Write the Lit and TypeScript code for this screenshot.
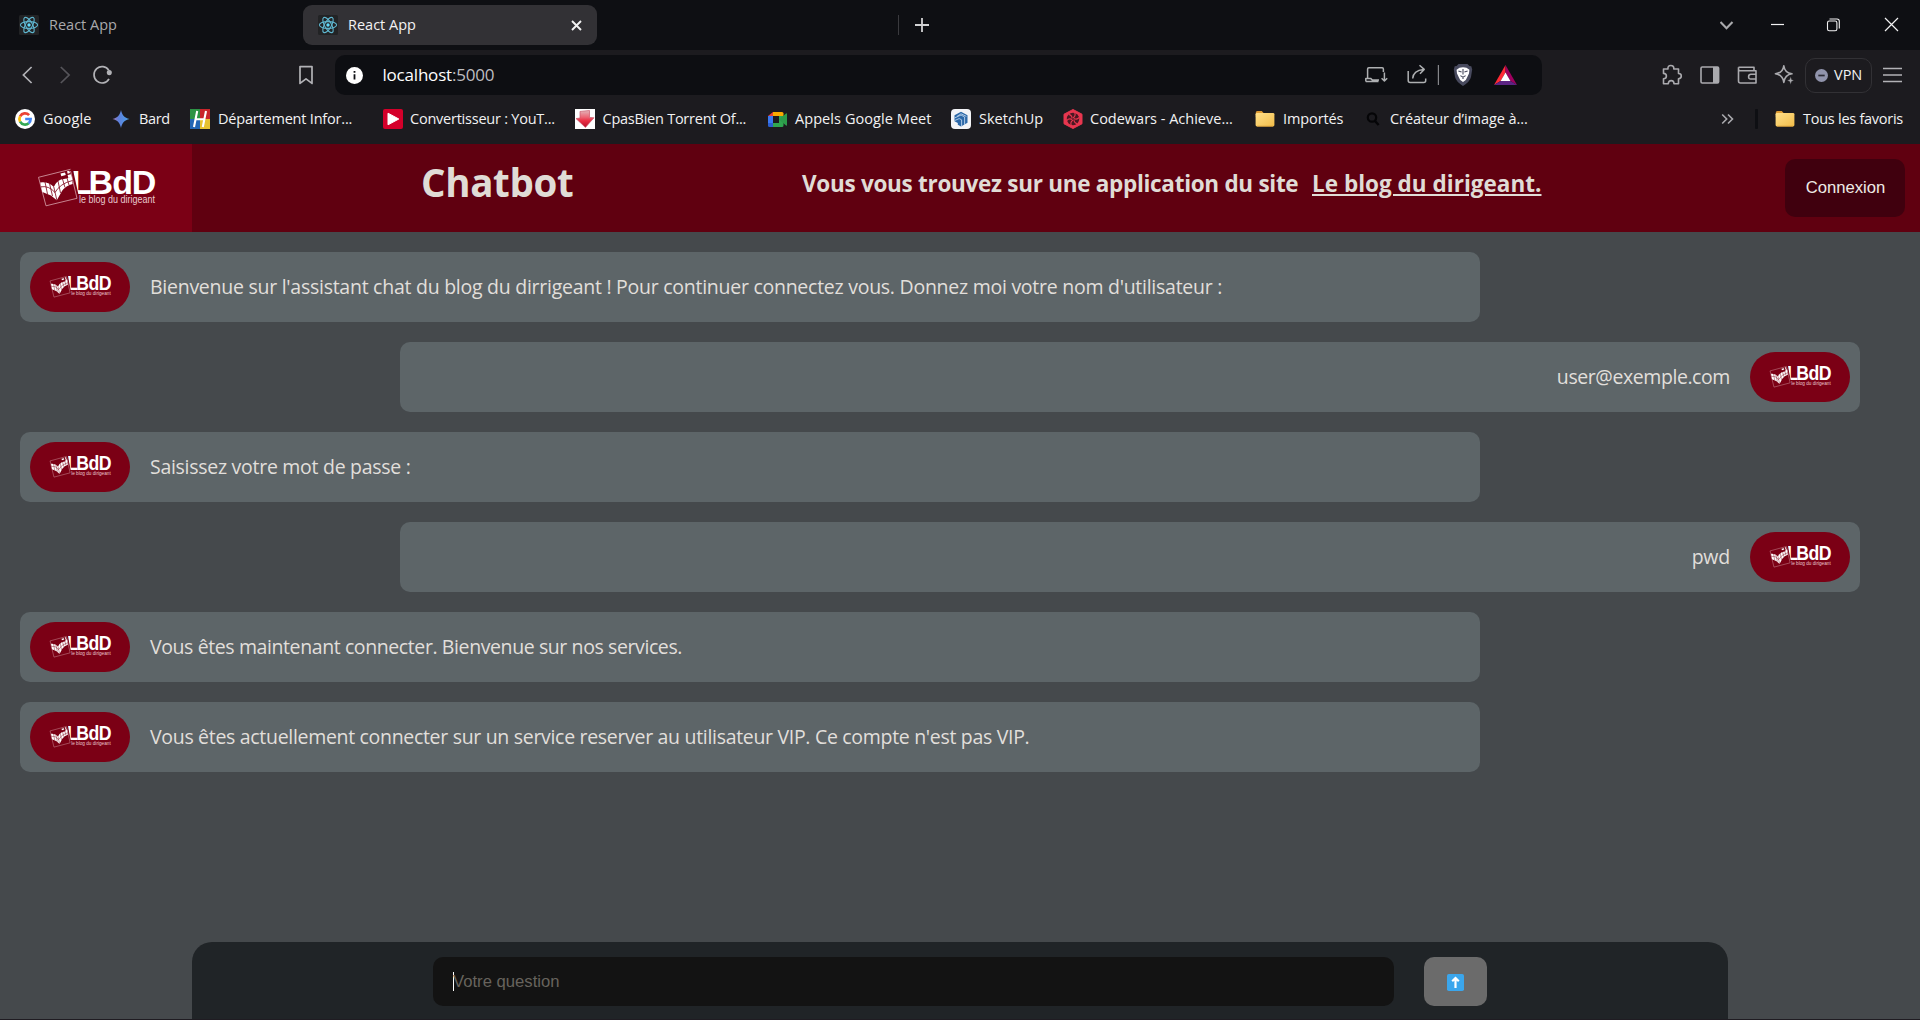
import { LitElement, html, css, svg } from "lit";
import { customElement, property } from "lit/decorators.js";
import { styleMap } from "lit/directives/style-map.js";

const icon = (w: number, h: number, body: unknown) => html`<svg
  width=${w}
  height=${h}
  viewBox="0 0 ${w} ${h}"
  fill="none"
  style="display:block;flex:none"
>
  ${body}
</svg>`;

const reactIcon = icon(20, 20, svg`
  <rect width="20" height="20" rx="1.5" fill="#222325"/>
  <g stroke="#5fb6cf" stroke-width="1.1">
    <ellipse cx="10" cy="10" rx="8.6" ry="3.4"/>
    <ellipse cx="10" cy="10" rx="8.6" ry="3.4" transform="rotate(60 10 10)"/>
    <ellipse cx="10" cy="10" rx="8.6" ry="3.4" transform="rotate(120 10 10)"/>
  </g>
  <circle cx="10" cy="10" r="1.7" fill="#61dafb"/>`);

const googleIcon = icon(20, 20, svg`
  <circle cx="10" cy="10" r="10" fill="#fff"/>
  <g stroke-width="2.7">
    <path d="M14.1 6.2A5.6 5.6 0 0 0 5.1 7.3" stroke="#ea4335"/>
    <path d="M5.1 7.3A5.6 5.6 0 0 0 5.1 12.7" stroke="#fbbc05"/>
    <path d="M5.1 12.7A5.6 5.6 0 0 0 13.7 14.2" stroke="#34a853"/>
    <path d="M13.7 14.2A5.6 5.6 0 0 0 15.6 10H10.2" stroke="#4285f4"/>
  </g>`);

const bardIcon = icon(18, 20, svg`
  <defs><linearGradient id="bard" x1="0" y1="0" x2="1" y2="0"><stop offset="0" stop-color="#a67bb0"/><stop offset=".35" stop-color="#5f7fdc"/><stop offset="1" stop-color="#4aa3e8"/></linearGradient></defs>
  <path d="M9 1C10 6 12.4 8.8 17.5 10C12.4 11.2 10 14 9 19C8 14 5.6 11.2 .5 10C5.6 8.8 8 6 9 1Z" fill="url(#bard)"/>`);

const deptIcon = icon(20, 20, svg`
  <path d="M0 0H10V10H0Z" fill="#2c9345"/><path d="M10 0H20V10H10Z" fill="#c9252b"/>
  <path d="M0 10H10V20H0Z" fill="#2266b5"/><path d="M10 10H20V20H10Z" fill="#e6c22f"/>
  <path d="M7.2 2L4 18M16 2L12.8 18M5.8 10.3H14.4" stroke="#fff" stroke-width="2.1"/>`);

const convIcon = icon(20, 20, svg`
  <rect width="20" height="20" rx="2" fill="#d4002a"/>
  <path d="M5 4.2L15.8 10L5 15.8Z" fill="#fff" stroke="#fff" stroke-linejoin="round"/>`);

const cpasIcon = icon(20, 20, svg`
  <defs><linearGradient id="cpas" x1="0" y1="0" x2="0" y2="1"><stop offset="0" stop-color="#e3b4ba"/><stop offset=".4" stop-color="#ec6473"/><stop offset=".6" stop-color="#ea2f45"/><stop offset="1" stop-color="#b80f28"/></linearGradient></defs>
  <rect width="20" height="20" fill="#fff"/>
  <path d="M5 2.4L14.5 1.5V8.4L19 8.8L10.4 18.4L1 9.6L5 9Z" fill="url(#cpas)" stroke="#c9586a" stroke-width=".7"/>`);

const meetIcon = icon(20, 18, svg`
  <path d="M5 2V6H0Z" fill="#ea4335"/><path d="M5 2H14Q15.5 2 15.5 3.5V6H5Z" fill="#f9ab00"/>
  <path d="M0 6H5V13H0Z" fill="#3b78f0"/><path d="M0 13H5V17H1.5Q0 17 0 15.5Z" fill="#2a5fd0"/>
  <path d="M5 13H11V6H15.5V15.5Q15.5 17 14 17H5Z" fill="#2fa650"/>
  <path d="M11 9.5L18 3.5Q19 3 19 4V15Q19 16 18 15.5Z" fill="#2c9c4a"/>`);

const sketchIcon = icon(20, 20, svg`
  <rect width="20" height="20" rx="4" fill="#f3f4f7"/>
  <path d="M3.5 6.2L10 2.8L16.5 6.2V13.8L10 17.4L6.8 15.8V14L3.5 12.2Z" fill="#2c68a8"/>
  <path d="M3.5 9L10 6L13.6 8V16M3.5 11.6L8.2 9.6L10.6 10.8V17.2M6 7.4L10 4.8L15.4 7.4" stroke="#b9d3ec" stroke-width=".9"/>`);

const codewarsIcon = icon(20, 20, svg`
  <path d="M10 .5L19 5.2V14.8L10 19.5L1 14.8V5.2Z" fill="#e8364f" stroke="#e8364f" stroke-linejoin="round"/>
  <circle cx="10" cy="10" r="6.2" fill="#4a1822"/>
  <g stroke="#e8364f" stroke-width="1.1">
    ${[0, 60, 120, 180, 240, 300].map(a => svg`<path d="M10 9Q13 7 11.8 3.8" transform="rotate(${a} 10 10)"/>`)}
  </g>`);

const folderIcon = icon(20, 20, svg`
  <defs><linearGradient id="fold" x1="0" y1="0" x2="1" y2="1"><stop offset="0" stop-color="#ffe08a"/><stop offset="1" stop-color="#f2bd4a"/></linearGradient></defs>
  <path d="M.8 3.5Q.8 2 2.2 2H6.8L8.6 4H18V8H.8Z" fill="#dd9a33"/>
  <rect x=".6" y="3.9" width="18.8" height="13.6" rx="1.4" fill="url(#fold)"/>
  <path d="M2 17.2H18" stroke="#d99d36" stroke-width=".8"/>`);

const searchIcon = icon(14, 16, svg`
  <circle cx="6" cy="6.5" r="4.2" stroke="#050507" stroke-width="2.2"/>
  <path d="M9 10L12.6 14" stroke="#050507" stroke-width="2.4"/>`);

const infoIcon = icon(17, 17, svg`
  <circle cx="8.5" cy="8.5" r="8.5" fill="#fff"/>
  <path d="M8.5 7.2V12.6M8.5 4V5.8" stroke="#0d0e12" stroke-width="1.8"/>`);

const braveIcon = icon(20, 24, svg`
  <path d="M5.5 1H14.5L16.4 3L18.3 3.2L19.2 6.5L18 14Q17 18.5 10 23Q3 18.5 2 14L.8 6.5L1.7 3.2L3.6 3Z" fill="#484a5e"/>
  <path d="M6.5 4.8L10 4.2L13.5 4.8L16.4 6.8L16 10.6L14.2 14.2L12.8 17L10 19L7.2 17L5.8 14.2L4 10.6L3.6 6.8Z" fill="#fff"/>
  <path d="M5.4 8L8.6 9M14.6 8L11.4 9M10 6V11.4M7.4 12.6L10 14.2L12.6 12.6M10 14V16" stroke="#484a5e" stroke-width="1.1"/>`);

const batIcon = icon(23, 20, svg`
  <path d="M11.5 0L0 20L6.6 16L11.5 7.4Z" fill="#ff2a35"/>
  <path d="M11.5 0L23 20L16.4 16L11.5 7.4Z" fill="#9e005f"/>
  <path d="M0 20H23L16.4 16H6.6Z" fill="#5c2483"/>
  <path d="M11.5 7.4L16.4 16H6.6Z" fill="#fff"/>`);

/** Brand lock-up: tilted book mark, name and tagline. */
@customElement("lbdd-logo")
class LbddLogo extends LitElement {
  static styles = css`
    :host { display: block; background: #7b0015; overflow: hidden; }
    svg { display: block; width: 100%; height: 100%; }
    .name { font: bold 34px "Liberation Sans", Arial, sans-serif; fill: #fff; }
    .tag { font: 10px "Liberation Sans", Arial, sans-serif; fill: #e9c9ce; }
  `;
  render() {
    return html`<svg viewBox="0 0 192 88" preserveAspectRatio="none">
      <text class="name" x="71 88.6 112.2 131.8" y="50">LBdD</text>
      <path d="M70 24H72.6L78.4 50.5H70Z" fill="#7b0015"/>
      <path d="M70.5 25.3L38.5 33.3L46 61.8L77 54.3L70.5 27" fill="none" stroke="#d9a5ad" stroke-width=".8"/>
      <path d="M40.3 38.4Q49 37.5 53.8 43Q56 37.5 61 35.5L66.5 34.5L71.8 32.6L72.6 40Q66 41.5 62 47L56.8 56.3L51 51.5L42.3 48Z" fill="#fff"/>
      <path d="M41 42.8Q49 41.5 55 48.5Q60 39.5 72.5 36.5M45 38L47.5 50M49.5 39.5L52.5 52M53.8 43L56.8 56M58 37L60.5 49M62.5 35L65 43.5M67 34L69 41" fill="none" stroke="#7b0015" stroke-width=".8"/>
      <path d="M60.5 29.5L65 28.4L65.8 31L61.3 32.2ZM67 27.3L69.3 26.7L70 29L67.7 29.7ZM67.6 31L70.8 30.2L71.6 33L68.4 34Z" fill="#fff"/>
      <text class="tag" x="79" y="58.6" textLength="76" lengthAdjust="spacingAndGlyphs">le blog du dirigeant</text>
    </svg>`;
  }
}

interface Bookmark { label: string; track: number; icon: unknown; gap: number; after: number; }

const bookmarks: Bookmark[] = [
  { label: "Google", track: 0.15, icon: googleIcon, gap: 8, after: 112 },
  { label: "Bard", track: -0.35, icon: bardIcon, gap: 9, after: 190 },
  { label: "Département Infor...", track: -0.2, icon: deptIcon, gap: 8, after: 383 },
  { label: "Convertisseur : YouT...", track: -0.23, icon: convIcon, gap: 7, after: 575 },
  { label: "CpasBien Torrent Of...", track: -0.24, icon: cpasIcon, gap: 7.5, after: 768 },
  { label: "Appels Google Meet", track: 0.07, icon: meetIcon, gap: 7, after: 951 },
  { label: "SketchUp", track: 0, icon: sketchIcon, gap: 8, after: 1063 },
  { label: "Codewars - Achieve...", track: 0, icon: codewarsIcon, gap: 7, after: 1255 },
  { label: "Importés", track: -0.1, icon: folderIcon, gap: 8, after: 1366 },
  { label: "Créateur d’image à...", track: -0.05, icon: searchIcon, gap: 10, after: 1560 },
];

/** Browser window frame: tab strip, toolbar and bookmark bar. */
@customElement("browser-chrome")
class BrowserChrome extends LitElement {
  static styles = css`
    :host { display: block; height: 144px; background: #1c1b1f; color: #f2f2f3;
      font: 14.5px/20px "Open Sans", "Noto Sans", sans-serif; white-space: nowrap; }
    .row { display: flex; align-items: center; }
    .tabs { height: 50px; background: #0e0f13; }
    .tab { display: flex; align-items: center; gap: 10px; box-sizing: border-box; height: 40px; }
    .idle { width: 303px; padding-left: 19px; color: #a9a9ac; }
    .active { width: 294px; padding: 0 15px; background: #323135; border-radius: 9px; }
    .grow { flex: 1; }
    .rule { width: 1px; height: 20px; background: #3a3a3e; margin: 0 16px 0 301px; }
    .tools { height: 50px; }
    .url { display: flex; align-items: center; box-sizing: border-box; width: 1207px; height: 40px;
      margin-left: 20px; padding-left: 11px; border-radius: 10px; background: #0d0e12; }
    .host { font-size: 17px; letter-spacing: -0.2px; margin-left: 19.5px; padding-bottom: 1px; color: #fff; }
    .port { color: #bdbdc0; }
    .vpn { display: flex; align-items: center; gap: 6px; box-sizing: border-box; width: 67px; height: 35px;
      padding-left: 9px; border: 1px solid #323135; border-radius: 10px; margin-left: 11px; }
    .marks { height: 38px; padding-left: 15px; }
    .mark { display: flex; align-items: center; }
    .bar { width: 3px; height: 20px; background: #0e0f13; margin: 0 17px 0 21px; border-radius: 1px; }
    .all { display: flex; align-items: center; gap: 8px; letter-spacing: -0.26px; width: 145px; }
  `;
  render() {
    let left = 15;
    return html`
      <div class="row tabs">
        <div class="tab idle">${reactIcon}<span>React App</span></div>
        <div class="tab active">${reactIcon}<span>React App</span><span class="grow"></span>
          ${icon(11, 11, svg`<path d="M1 1L10 10M10 1L1 10" stroke="#f2f2f3" stroke-width="1.9"/>`)}</div>
        <div class="rule"></div>
        ${icon(14, 14, svg`<path d="M7 0V14M0 7H14" stroke="#d2d2d4" stroke-width="1.8"/>`)}
        <span class="grow"></span>
        ${icon(200, 20, svg`
          <path d="M.5 7L6.5 13.2L12.5 7" stroke="#a9a9ac" stroke-width="2.1"/>
          <path d="M51 9.5H64" stroke="#f2f2f3" stroke-width="1.2"/>
          <rect x="107.5" y="6" width="9.4" height="9.8" rx="1.8" stroke="#f2f2f3" stroke-width="1.1"/>
          <path d="M109.5 4H117Q119.3 4 119.3 6.3V13.6" stroke="#f2f2f3" stroke-width="1.1"/>
          <path d="M165 3L178 16M178 3L165 16" stroke="#f2f2f3" stroke-width="1.2"/>`)}
      </div>
      <div class="row tools">
        ${icon(315, 24, svg`
          <g stroke-width="1.7">
            <path d="M31.6 4L23.4 12L31.6 20" stroke="#b2b2b6"/>
            <path d="M60.8 4L69.1 12L60.8 20" stroke="#56555a"/>
            <path d="M109 15.8A8 8.2 0 1 1 108.8 7.4" stroke="#b2b2b6"/>
            <circle cx="109.3" cy="9.6" r="1.7" fill="#b2b2b6" stroke="#b2b2b6"/>
            <path d="M300 3.6H312V20.4L306 15.8L300 20.4Z" stroke="#b2b2b6" stroke-linejoin="round"/>
          </g>`)}
        <div class="url">
          ${infoIcon}
          <span class="host">localhost<span class="port">:5000</span></span>
          <span class="grow"></span>
          ${icon(80, 24, svg`
            <g stroke="#aeb0b2" stroke-width="1.5" stroke-linejoin="round">
              <path d="M18.4 9V6Q18.4 4.8 17.2 4.8H3.8Q2.6 4.8 2.6 6V15.5M.8 18.4H13.5M.8 18.4V15.4H5.6L7.2 16.9H14"/>
              <path d="M19.4 9.6V17.6M16.6 15.2L19.4 18L22.2 15.2"/>
              <path d="M43.2 8V17.6Q43.2 19.6 45.2 19.6H58.8Q60.7 19.6 60.7 17.6V15.5"/>
              <path d="M47.7 15.5Q48.2 7.5 58.7 6.5M54.5 2.2L59.2 6.4L55 10.8"/>
            </g>
            <path d="M73.4 2V22" stroke="#85868a" stroke-width="1.2"/>`)}
          ${icon(8, 1, "")}${braveIcon}${icon(21, 1, "")}${batIcon}${icon(25, 1, "")}
        </div>
        <span class="grow"></span>
        ${icon(132, 24, svg`
          <g stroke="#aaaaae" stroke-width="1.6" stroke-linejoin="round">
            <path d="M1.5 6H6Q5.5 2.5 8.8 2.5T11.8 6H16.5V10.5Q19.3 10.5 19.3 13T16.5 15.7V20.7H12Q12 17.6 9.2 17.6T6.3 20.7H1.5V15.8Q4.4 15.8 4.4 13.1T1.5 10.4Z"/>
            <rect x="39" y="4" width="17.6" height="16" rx="1.2"/>
            <path d="M76.5 4.2H92V7.6M76.5 4.2V18Q76.5 20 78.5 20H94V7.8H78Q76.5 7.8 76.5 6M94.5 11.2H89Q86.6 11.2 86.6 13.7T89 16H94.5"/>
            <path d="M121.8 3.4Q122.8 10.6 130 11.4Q122.8 12.4 121.8 20Q120.8 12.4 113.4 11.4Q120.8 10.6 121.8 3.4Z" transform="translate(0 -.6)"/>
          </g>
          <path d="M51 4H57V20H51Z" fill="#aaaaae"/>
          <path d="M128.6 13.5L129.6 16.6L132 17.6L129.6 18.6L128.6 21.5L127.6 18.6L125 17.6L127.6 16.6Z" fill="#aaaaae" stroke="#1c1b1f" stroke-width=".4"/>`)}
        <div class="vpn">
          ${icon(13, 13, svg`<circle cx="6.5" cy="6.5" r="6.5" fill="#9194ac"/><path d="M3.3 6.5H9.7" stroke="#2c2c36" stroke-width="1.7"/>`)}
          <span>VPN</span>
        </div>
        ${icon(48, 20, svg`<path d="M11 3.5H30M11 10H30M11 16.5H30" stroke="#b2b2b6" stroke-width="1.5"/>`)}
      </div>
      <div class="row marks">
        ${bookmarks.map(b => {
          const width = b.after - left;
          left = b.after;
          return html`<div class="mark" style=${styleMap({ width: `${width}px`, gap: `${b.gap}px`, letterSpacing: `${b.track}px` })}>
            ${b.icon}<span>${b.label}</span></div>`;
        })}
        <span class="grow"></span>
        ${icon(13, 12, svg`<path d="M1.2 1.5L5.7 6L1.2 10.5M7 1.5L11.5 6L7 10.5" stroke="#aaaaae" stroke-width="1.6"/>`)}
        <div class="bar"></div>
        <div class="all">${folderIcon}<span>Tous les favoris</span></div>
      </div>`;
  }
}

/** One chat line; `mine` places it on the right with the avatar last. */
@customElement("chat-message")
class ChatMessage extends LitElement {
  @property() text = "";
  @property({ type: Number }) track = 0;
  @property({ type: Boolean, reflect: true }) mine = false;
  static styles = css`
    :host { display: flex; align-items: center; gap: 20px; box-sizing: border-box; width: 1460px; height: 70px;
      padding: 0 10px; border-radius: 10px; background: #5d6568; color: #e1dfdb;
      font: 19.5px/28px "Open Sans", "Noto Sans", sans-serif; white-space: nowrap; }
    :host([mine]) { flex-direction: row-reverse; align-self: flex-end; }
    .avatar { width: 100px; height: 50px; border-radius: 25px; flex: none; }
  `;
  render() {
    return html`<lbdd-logo class="avatar"></lbdd-logo>
      <span style=${styleMap({ letterSpacing: `${this.track}px` })}>${this.text}</span>`;
  }
}

const messages = [
  { text: "Bienvenue sur l'assistant chat du blog du dirrigeant ! Pour continuer connectez vous. Donnez moi votre nom d'utilisateur :", track: -0.262, mine: false },
  { text: "user@exemple.com", track: -0.42, mine: true },
  { text: "Saisissez votre mot de passe :", track: -0.28, mine: false },
  { text: "pwd", track: -0.2, mine: true },
  { text: "Vous êtes maintenant connecter. Bienvenue sur nos services.", track: -0.4, mine: false },
  { text: "Vous êtes actuellement connecter sur un service reserver au utilisateur VIP. Ce compte n'est pas VIP.", track: -0.31, mine: false },
];

@customElement("app-root")
class AppRoot extends LitElement {
  static styles = css`
    :host { display: flex; flex-direction: column; width: 1920px; height: 1020px; overflow: hidden;
      background: #45494c; font-family: "Open Sans", "Noto Sans", sans-serif; }
    .header { display: flex; height: 88px; background: #600010; color: #e0dcd6; white-space: nowrap; flex: none; }
    .logo { width: 192px; height: 88px; }
    .title { margin: 0 0 0 229px; width: 381px; font-size: 38.5px; line-height: 77px; letter-spacing: -0.35px; font-weight: 700; }
    .lead { margin: 0; font-size: 22.5px; line-height: 80px; letter-spacing: -0.29px; font-weight: 700; width: 510px; }
    .link { font-size: 22.5px; line-height: 80px; font-weight: 700; letter-spacing: 0.02px; color: inherit;
      text-decoration: underline; text-decoration-thickness: 2px; text-underline-offset: 2px; text-decoration-skip-ink: auto; }
    .login { margin: 15px 15px 0 auto; width: 120px; height: 58px; border: 0; border-radius: 10px; padding: 0 0 1px 1px;
      background: #40000e; color: #eeeae5; font: 16.67px "Liberation Sans", Arial, sans-serif; }
    .chat { display: flex; flex-direction: column; gap: 20px; flex: 1; padding: 20px 60px 0 20px; }
    .composer { display: flex; box-sizing: border-box; align-self: center; width: 1536px; height: 77px; flex: none;
      padding: 15px 0 0 241px; gap: 30px; border-radius: 20px 20px 0 0; background: #202427; }
    .field { display: flex; align-items: center; box-sizing: border-box; width: 961px; height: 49px; padding-left: 20px;
      border-radius: 10px; background: #131313; color: #67635d; font: 16.67px "Liberation Sans", Arial, sans-serif; }
    .caret { width: 1px; height: 19px; background: #fff; margin-right: -1px; }
    .send { display: grid; place-items: center; width: 63px; height: 49px; border: 0; padding: 1px 0 0; border-radius: 10px; background: #6b6b6b; }
    .edge { height: 1px; background: #1f1c22; flex: none; }
  `;
  render() {
    return html`
      <browser-chrome></browser-chrome>
      <header class="header">
        <lbdd-logo class="logo"></lbdd-logo>
        <h1 class="title">Chatbot</h1>
        <p class="lead">Vous vous trouvez sur une application du site</p>
        <a class="link">Le blog du dirigeant.</a>
        <button class="login">Connexion</button>
      </header>
      <main class="chat">
        ${messages.map(m => html`<chat-message .text=${m.text} .track=${m.track} ?mine=${m.mine}></chat-message>`)}
      </main>
      <footer class="composer">
        <div class="field"><span class="caret"></span>Votre question</div>
        <button class="send">
          ${icon(17, 17, svg`<rect width="17" height="17" rx="1.8" fill="#3ba6ec"/>
            <path d="M8.5 14V5M5.2 7.2L8.5 4L11.8 7.2" stroke="#fff" stroke-width="2.2"/>`)}
        </button>
      </footer>
      <div class="edge"></div>`;
  }
}
